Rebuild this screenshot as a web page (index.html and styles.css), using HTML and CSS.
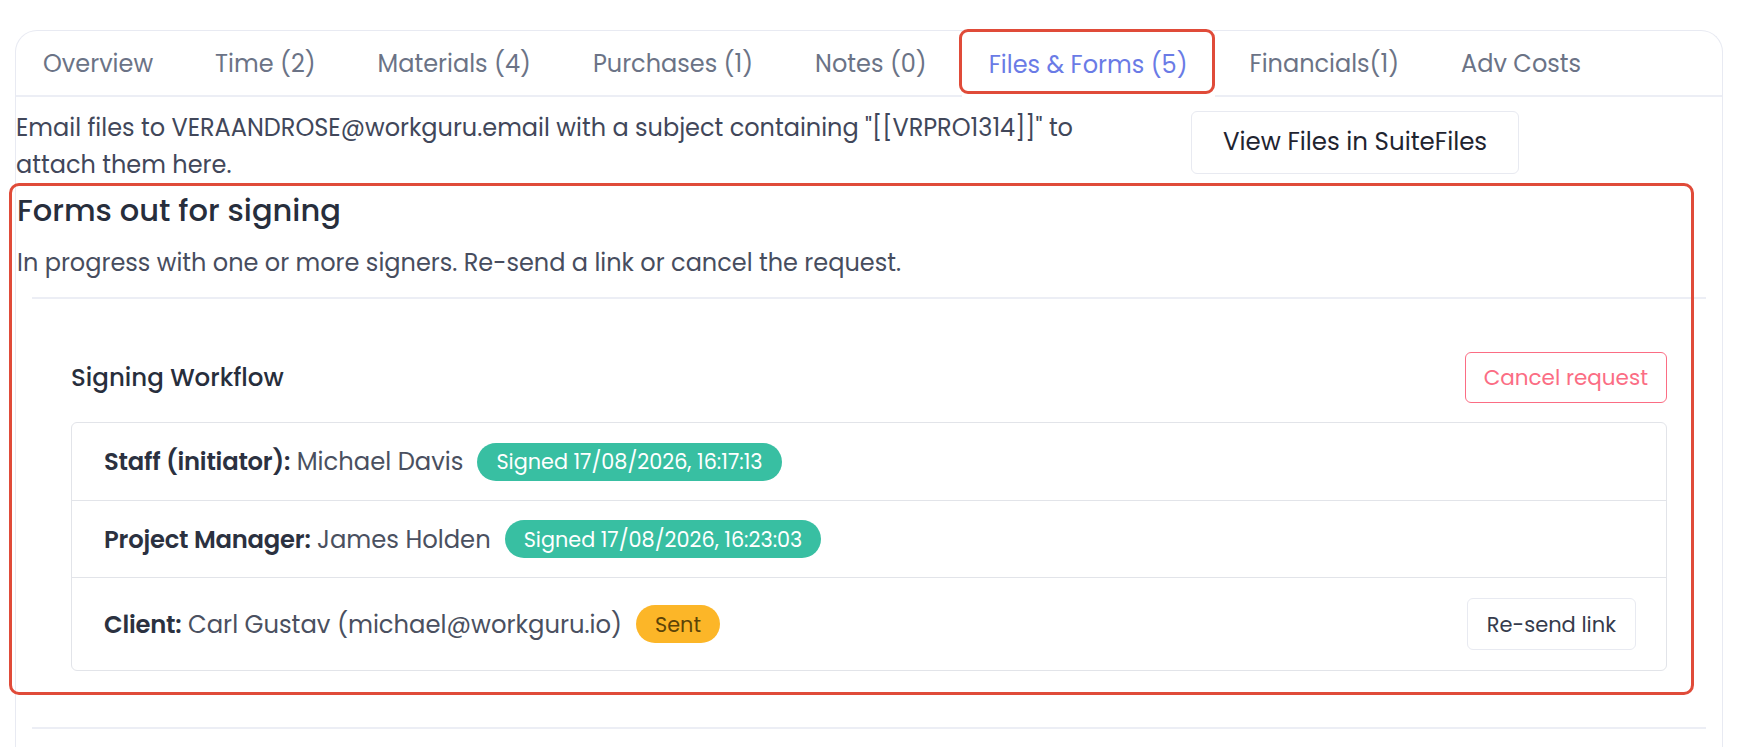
FILE: index.html
```html
<!DOCTYPE html>
<html lang="en">
<head>
    <meta charset="UTF-8">
    <meta name="viewport" content="width=device-width, initial-scale=1.0">
    <title>Project - Files &amp; Forms</title>
    <link rel="stylesheet" href="styles.css">
</head>
<body>
    <div class="card">
        <!-- Project tabs -->
        <nav class="tabs">
            <a href="#" class="tab">Overview</a>
            <a href="#" class="tab">Time (2)</a>
            <a href="#" class="tab">Materials (4)</a>
            <a href="#" class="tab">Purchases (1)</a>
            <a href="#" class="tab">Notes (0)</a>
            <a href="#" class="tab active">Files &amp; Forms (5)</a>
            <a href="#" class="tab">Financials(1)</a>
            <a href="#" class="tab">Adv Costs</a>
        </nav>

        <div class="email-row">
            <p class="email-note">Email files to VERAANDROSE@workguru.email with a subject containing "[[VRPRO1314]]" to attach them here.</p>
            <button class="btn btn-light">View Files in SuiteFiles</button>
        </div>

        <!-- Forms waiting on signatures -->
        <section class="signing">
            <span class="callout"></span>
            <h2>Forms out for signing</h2>
            <p class="muted">In progress with one or more signers. Re-send a link or cancel the request.</p>

            <div class="workflow">
                <div class="workflow-head">
                    <h3>Signing Workflow</h3>
                    <button class="btn btn-outline-danger">Cancel request</button>
                </div>
                <ul class="signers">
                    <li>
                        <span><b>Staff (initiator):</b> Michael Davis</span>
                        <span class="badge badge-success">Signed 17/08/2026, 16:17:13</span>
                    </li>
                    <li>
                        <span><b>Project Manager:</b> James Holden</span>
                        <span class="badge badge-success">Signed 17/08/2026, 16:23:03</span>
                    </li>
                    <li>
                        <span><b>Client:</b> Carl Gustav (michael@workguru.io)</span>
                        <span class="badge badge-warning">Sent</span>
                        <button class="btn btn-light btn-sm">Re-send link</button>
                    </li>
                </ul>
            </div>
        </section>
    </div>
</body>
</html>
```

FILE: styles.css
```css
:root {
    --primary: #6a7be6;
    --text-dark: #272e3c;
    --text-body: #41475a;
    --text-muted: #6b7386;
    --line: #eceef5;
    --success: #38bfa2;
    --warning: #fcb628;
    --danger: #fb6d84;
    --callout: #e04b39;
}

* {
    margin: 0;
    padding: 0;
    box-sizing: border-box;
    font-family: 'Poppins', 'Inter', sans-serif;
}

html, body {
    overflow: hidden;
}

body {
    background: #fff;
    color: var(--text-body);
    font-size: 24px;
    line-height: 37px;
    padding: 30px 17px 0 15px;
}

.card {
    border: 1.5px solid #e8eaf2;
    border-bottom: none;
    border-radius: 22px 22px 0 0;
    padding-bottom: 60px;
}

/* Tabs */
.tabs {
    display: flex;
    gap: 8px;
    height: 66px;
    border-bottom: 2px solid var(--line);
}

.tab {
    position: relative;
    display: flex;
    align-items: center;
    padding: 0 27px;
    color: var(--text-muted);
    text-decoration: none;
}

.tab.active {
    color: var(--primary);
    background: #fff;
    margin-bottom: -2px;
}

.tab.active::after {
    content: "";
    position: absolute;
    top: -2px;
    left: -3px;
    right: 0;
    bottom: 3px;
    border: 3px solid var(--callout);
    border-radius: 9px;
}

/* Email note */
.email-row {
    display: flex;
    align-items: flex-start;
    padding-top: 12px;
}

.email-note {
    width: 1110px;
}

.btn {
    font-size: 24.5px;
    line-height: 1;
    border-radius: 6px;
    cursor: pointer;
    background: #fff;
}

.btn-light {
    border: 1.5px solid #e8eaf1;
    color: #1f2430;
    font-weight: 400;
    height: 63px;
    padding: 0 31px;
    margin-left: 65px;
    margin-top: 2px;
}

.btn-sm {
    height: 52px;
    margin-top: 0;
    padding: 0 19px;
    font-size: 21px;
    color: #353b4c;
    margin-left: auto;
}

.btn-outline-danger {
    border: 1.5px solid var(--danger);
    color: var(--danger);
    height: 51px;
    padding: 0 18px;
    font-size: 21.5px;
}

/* Signing section */
.signing {
    position: relative;
    margin-top: 10px;
}

.callout {
    position: absolute;
    top: -10px;
    left: -7px;
    right: 28px;
    bottom: 34px;
    border: 3px solid var(--callout);
    border-radius: 10px;
    pointer-events: none;
}

.signing h2 {
    font-size: 30.5px;
    line-height: 36px;
    font-weight: 500;
    color: var(--text-dark);
    padding-left: 1px;
}

.muted {
    margin-top: 15px;
    padding-left: 1px;
    color: #474d5e;
}

.workflow {
    margin: 16px 16px 0;
    border-top: 2px solid var(--line);
    border-bottom: 2px solid var(--line);
    padding: 53px 39px 56px;
}

.workflow-head {
    display: flex;
    justify-content: space-between;
    align-items: center;
}

.workflow-head h3 {
    font-size: 24.5px;
    font-weight: 500;
    color: var(--text-dark);
}

.signers {
    list-style: none;
    margin-top: 19px;
    border: 1.5px solid #e2e4e9;
    border-radius: 6px;
}

.signers li {
    display: flex;
    align-items: center;
    gap: 14px;
    padding: 19px 30px 19px 32px;
    min-height: 77px;
    font-size: 24.25px;
    color: #4a5060;
}

.signers li + li {
    border-top: 1.5px solid #e2e4e9;
}

.signers li:last-child {
    min-height: 0;
    padding-top: 20px;
    padding-bottom: 20px;
}

.signers b {
    font-weight: 600;
    color: #2b3140;
    letter-spacing: -0.2px;
}

.badge {
    display: inline-flex;
    align-items: center;
    height: 38px;
    padding: 0 19px;
    border-radius: 19px;
    font-size: 20.75px;
    font-weight: 400;
}

.badge-success {
    background: var(--success);
    color: #fff;
}

.badge-warning {
    background: var(--warning);
    color: #5b4307;
}
```
